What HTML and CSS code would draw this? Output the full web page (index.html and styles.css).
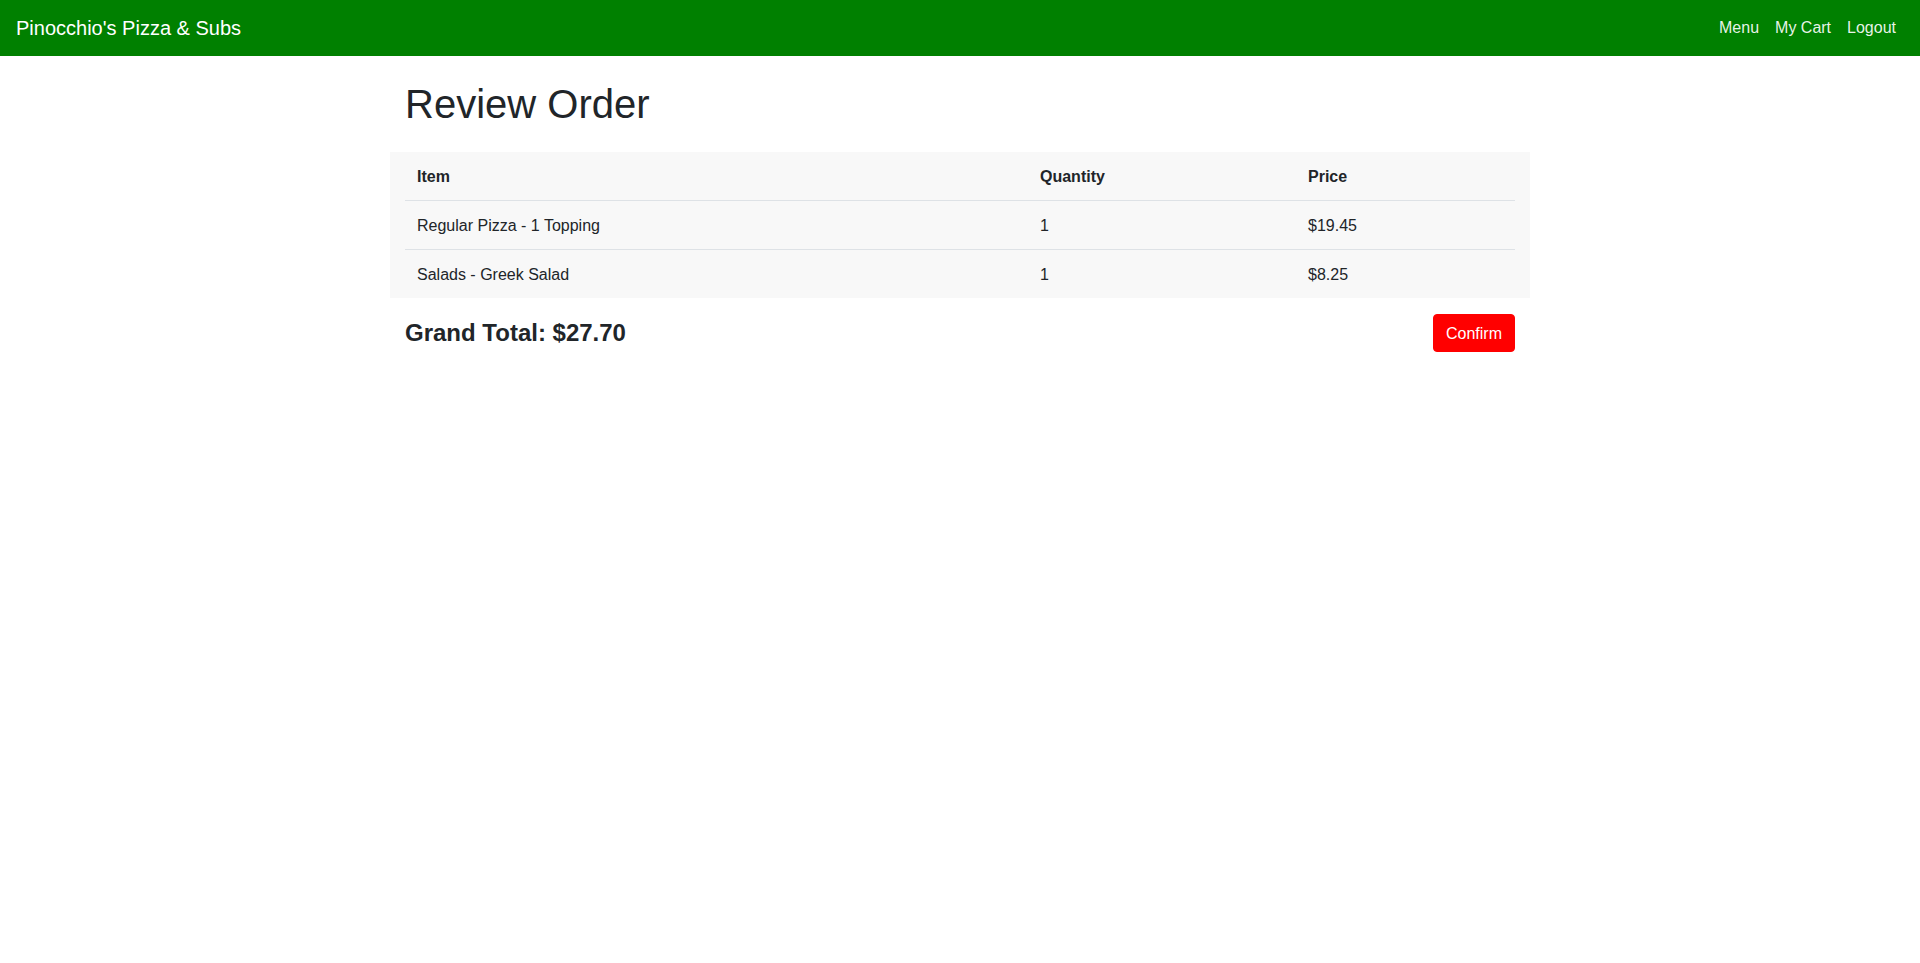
FILE: index.html
```html
<!DOCTYPE html>
<html lang="en">
<head>
<meta charset="utf-8">
<title>Review Order</title>
<link rel="stylesheet" href="styles.css">
</head>
<body>
<nav class="navbar">
  <a class="brand" href="#">Pinocchio's Pizza &amp; Subs</a>
  <ul class="nav">
    <li><a class="nav-link" href="#">Menu</a></li>
    <li><a class="nav-link" href="#">My Cart</a></li>
    <li><a class="nav-link" href="#">Logout</a></li>
  </ul>
</nav>
<main class="container">
  <h1 class="title">Review Order</h1>
  <div class="table-wrap">
    <table class="order-table">
      <thead>
        <tr>
          <th class="col-item">Item</th>
          <th class="col-qty">Quantity</th>
          <th class="col-price">Price</th>
        </tr>
      </thead>
      <tbody>
        <tr>
          <td>Regular Pizza - 1 Topping</td>
          <td>1</td>
          <td>$19.45</td>
        </tr>
        <tr>
          <td>Salads - Greek Salad</td>
          <td>1</td>
          <td>$8.25</td>
        </tr>
      </tbody>
    </table>
  </div>
  <div class="total-row">
    <h4 class="grand-total">Grand Total: $27.70</h4>
    <button class="btn-confirm" type="button">Confirm</button>
  </div>
</main>
</body>
</html>
```
FILE: styles.css
```css
* { box-sizing: border-box; }
html, body { margin: 0; padding: 0; }
body {
  font-family: "Liberation Sans", Arial, sans-serif;
  font-size: 16px;
  line-height: 1.5;
  color: #212529;
  background: #fff;
}
.navbar {
  background: #008000;
  height: 56px;
  padding: 8px 16px;
  display: flex;
  align-items: center;
  justify-content: space-between;
}
.brand {
  color: #fff;
  font-size: 20px;
  line-height: 30px;
  padding: 5px 0;
  text-decoration: none;
}
.nav {
  list-style: none;
  margin: 0;
  padding: 0;
  display: flex;
}
.nav-link {
  display: block;
  padding: 8px;
  line-height: 24px;
  color: rgba(255, 255, 255, 0.92);
  text-decoration: none;
}
.container {
  width: 1140px;
  margin: 0 auto;
  padding: 0 15px;
}
.title {
  font-size: 40px;
  font-weight: 400;
  line-height: 48px;
  margin: 24px 0 24px;
}
.table-wrap {
  background: #f8f8f8;
  margin: 0 -15px;
  padding: 0 15px;
}
.order-table {
  width: 100%;
  border-collapse: collapse;
  table-layout: fixed;
}
.order-table th,
.order-table td {
  text-align: left;
  padding: 13px 12px 11px;
  line-height: 24px;
  vertical-align: top;
}
.order-table th { font-weight: 700; }
.order-table td { border-top: 1px solid #dee2e6; }
.col-item { width: 623px; }
.col-qty { width: 268px; }
.col-price { width: 219px; }
.total-row {
  display: flex;
  align-items: center;
  justify-content: space-between;
  margin-top: 16px;
}
.grand-total {
  margin: 0;
  font-size: 24px;
  font-weight: 700;
  line-height: 1.2;
}
.btn-confirm {
  font-family: inherit;
  font-size: 16px;
  line-height: 24px;
  padding: 7px 12px 5px;
  height: 38px;
  color: #fff;
  background: #ff0000;
  border: 1px solid #ff0000;
  border-radius: 4px;
  cursor: pointer;
}
```
